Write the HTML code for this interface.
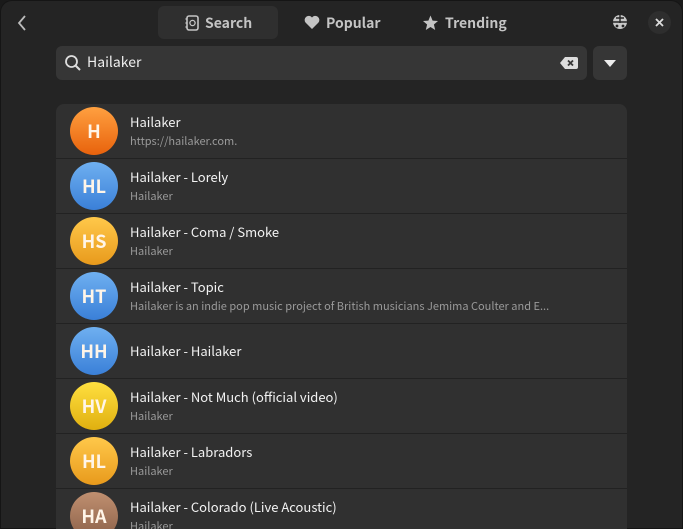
<!DOCTYPE html>
<html><head><meta charset="utf-8"><style>
*{margin:0;padding:0;box-sizing:border-box}
html,body{width:683px;height:529px;overflow:hidden;background:#1a1a1a}
body{font-family:"Noto Sans CJK SC","DejaVu Sans",sans-serif;color:#fff}
.win{position:absolute;left:0;top:0;width:683px;height:529px;background:#242424;border-radius:12px 12px 0 0;overflow:hidden;box-shadow:inset 0 0 0 1px #151515}
.tab{position:absolute;top:6px;height:33px;display:flex;align-items:center;font-weight:bold;font-size:14px;color:#c4c4c4}
.tab svg{margin-right:6px}
.search{position:absolute;left:56px;top:46px;width:531px;height:34px;background:#363636;border-radius:6px}
.search span{position:absolute;left:31px;top:6px;font-size:14px;color:#eee}
.dd{position:absolute;left:593px;top:46px;width:34px;height:34px;background:#363636;border-radius:6px}
.list{position:absolute;left:56px;top:104px;width:571px;height:440px;background:#303030;border-radius:8px 8px 0 0;overflow:hidden}
.row{position:relative;height:55px;border-bottom:1px solid #222}
.av{position:absolute;left:14px;top:3px;width:48px;height:48px;border-radius:50%;display:flex;align-items:center;justify-content:center;font-weight:bold;font-size:18px;color:#fff5e8}
.t{position:absolute;left:74px;top:8px;font-size:13px;color:#f2f2f2;white-space:nowrap}
.s{position:absolute;left:74px;top:29px;font-size:11px;color:#9a9a9a;white-space:nowrap}
.o{background:linear-gradient(#ffa040,#e8620c)}
.b{background:linear-gradient(#6fb0f0,#3a80d8)}
.y{background:linear-gradient(#ffc84a,#e89a1c)}
.g{background:linear-gradient(#ffe040,#e0b010)}
.br{background:linear-gradient(#c09070,#8a6048)}
</style></head><body><div class="win">
<svg style="position:absolute;left:16px;top:14px" width="12" height="18" viewBox="0 0 12 18"><path d="M9 2 L3 9 L9 16" stroke="#bbb" stroke-width="1.8" fill="none"/></svg>
<div style="position:absolute;left:158px;top:6px;width:120px;height:33px;background:#2f2f2f;border-radius:6px"></div>
<div class="tab" style="left:185px"><svg width="14" height="16" viewBox="0 0 14 16"><rect x="2" y="1" width="11" height="14" rx="2" fill="none" stroke="#c4c4c4" stroke-width="1.6"/><circle cx="7.5" cy="8" r="2.6" fill="none" stroke="#c4c4c4" stroke-width="1.3"/><path d="M0.5 4h2M0.5 8h2M0.5 12h2" stroke="#c4c4c4" stroke-width="1.4"/></svg>Search</div>
<div class="tab" style="left:304px"><svg width="16" height="15" viewBox="0 0 16 15"><path d="M8 14 L1.5 7.5 A3.8 3.8 0 0 1 8 2.5 A3.8 3.8 0 0 1 14.5 7.5 Z" fill="#c4c4c4"/></svg>Popular</div>
<div class="tab" style="left:422px"><svg width="17" height="16" viewBox="0 0 17 16"><path d="M8.5 0.5 L10.6 5.6 L16 6 L11.9 9.5 L13.2 15 L8.5 12 L3.8 15 L5.1 9.5 L1 6 L6.4 5.6Z" fill="#c4c4c4"/></svg>Trending</div>
<svg style="position:absolute;left:612px;top:14px" width="16" height="16" viewBox="0 0 16 16"><circle cx="8" cy="8" r="7" fill="#c8c8c8"/><path d="M1 8h14M8 1v8M4 4h8" stroke="#242424" stroke-width="1.4"/><circle cx="5" cy="12" r="1.4" fill="#242424"/><circle cx="11" cy="12" r="1.4" fill="#242424"/></svg>
<div style="position:absolute;left:648px;top:11px;width:23px;height:23px;border-radius:50%;background:#2e2e2e"></div>
<svg style="position:absolute;left:655px;top:18px" width="9" height="9" viewBox="0 0 9 9"><path d="M1 1L8 8M8 1L1 8" stroke="#ddd" stroke-width="1.8"/></svg>
<div class="search"><svg style="position:absolute;left:8px;top:8px" width="18" height="18" viewBox="0 0 18 18"><circle cx="7.5" cy="7.5" r="5.5" fill="none" stroke="#ddd" stroke-width="1.8"/><path d="M11.5 11.5L16 16" stroke="#ddd" stroke-width="2"/></svg><span>Hailaker</span>
<svg style="position:absolute;left:504px;top:11px" width="18" height="12" viewBox="0 0 18 12"><path d="M5 0H16a2 2 0 0 1 2 2V10a2 2 0 0 1-2 2H5L0 6Z" fill="#ddd"/><path d="M8 3.5L13 8.5M13 3.5L8 8.5" stroke="#363636" stroke-width="1.8"/></svg></div>
<div class="dd"><svg style="position:absolute;left:11px;top:14px" width="12" height="7" viewBox="0 0 12 7"><path d="M0 0H12L6 7Z" fill="#eee"/></svg></div>
<div class="list">
<div class="row"><div class="av o">H</div><div class="t">Hailaker</div><div class="s">https://hailaker.com.</div></div>
<div class="row"><div class="av b">HL</div><div class="t">Hailaker - Lorely</div><div class="s">Hailaker</div></div>
<div class="row"><div class="av y">HS</div><div class="t">Hailaker - Coma / Smoke</div><div class="s">Hailaker</div></div>
<div class="row"><div class="av b">HT</div><div class="t">Hailaker - Topic</div><div class="s">Hailaker is an indie pop music project of British musicians Jemima Coulter and E...</div></div>
<div class="row"><div class="av b">HH</div><div class="t" style="top:17px">Hailaker - Hailaker</div></div>
<div class="row"><div class="av g">HV</div><div class="t">Hailaker - Not Much (official video)</div><div class="s">Hailaker</div></div>
<div class="row"><div class="av y">HL</div><div class="t">Hailaker - Labradors</div><div class="s">Hailaker</div></div>
<div class="row"><div class="av br">HA</div><div class="t">Hailaker - Colorado (Live Acoustic)</div><div class="s">Hailaker</div></div>
</div>
</div></body></html>
